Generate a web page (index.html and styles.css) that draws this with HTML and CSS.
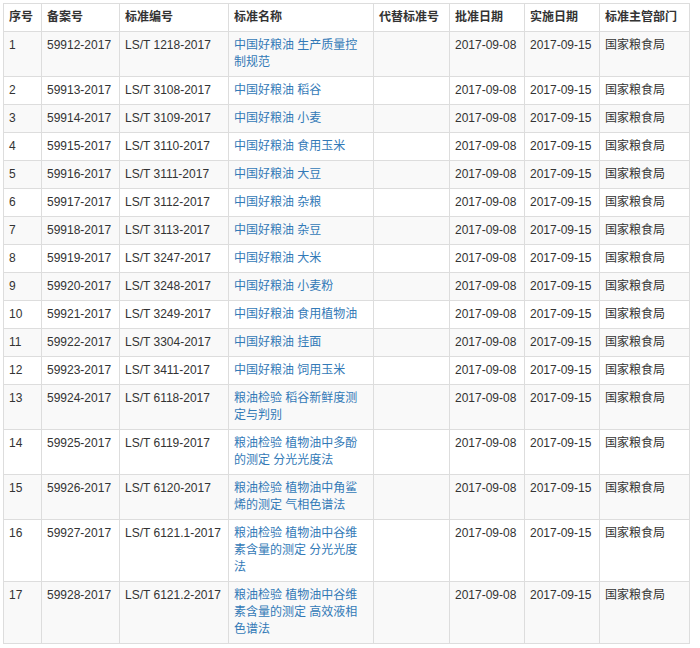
FILE: index.html
```html
<!DOCTYPE html>
<html lang="zh-CN">
<head>
<meta charset="utf-8">
<title>标准列表</title>
<link rel="stylesheet" href="styles.css">
</head>
<body>
<div class="wrap">
<table class="std-table">
<colgroup>
<col class="c1"><col class="c2"><col class="c3"><col class="c4"><col class="c5"><col class="c6"><col class="c7"><col class="c8">
</colgroup>
<thead>
<tr><th>序号</th><th>备案号</th><th>标准编号</th><th>标准名称</th><th>代替标准号</th><th>批准日期</th><th>实施日期</th><th>标准主管部门</th></tr>
</thead>
<tbody>
<tr><td>1</td><td>59912-2017</td><td>LS/T 1218-2017</td><td><a href="#">中国好粮油 生产质量控制规范</a></td><td></td><td>2017-09-08</td><td>2017-09-15</td><td>国家粮食局</td></tr>
<tr><td>2</td><td>59913-2017</td><td>LS/T 3108-2017</td><td><a href="#">中国好粮油 稻谷</a></td><td></td><td>2017-09-08</td><td>2017-09-15</td><td>国家粮食局</td></tr>
<tr><td>3</td><td>59914-2017</td><td>LS/T 3109-2017</td><td><a href="#">中国好粮油 小麦</a></td><td></td><td>2017-09-08</td><td>2017-09-15</td><td>国家粮食局</td></tr>
<tr><td>4</td><td>59915-2017</td><td>LS/T 3110-2017</td><td><a href="#">中国好粮油 食用玉米</a></td><td></td><td>2017-09-08</td><td>2017-09-15</td><td>国家粮食局</td></tr>
<tr><td>5</td><td>59916-2017</td><td>LS/T 3111-2017</td><td><a href="#">中国好粮油 大豆</a></td><td></td><td>2017-09-08</td><td>2017-09-15</td><td>国家粮食局</td></tr>
<tr><td>6</td><td>59917-2017</td><td>LS/T 3112-2017</td><td><a href="#">中国好粮油 杂粮</a></td><td></td><td>2017-09-08</td><td>2017-09-15</td><td>国家粮食局</td></tr>
<tr><td>7</td><td>59918-2017</td><td>LS/T 3113-2017</td><td><a href="#">中国好粮油 杂豆</a></td><td></td><td>2017-09-08</td><td>2017-09-15</td><td>国家粮食局</td></tr>
<tr><td>8</td><td>59919-2017</td><td>LS/T 3247-2017</td><td><a href="#">中国好粮油 大米</a></td><td></td><td>2017-09-08</td><td>2017-09-15</td><td>国家粮食局</td></tr>
<tr><td>9</td><td>59920-2017</td><td>LS/T 3248-2017</td><td><a href="#">中国好粮油 小麦粉</a></td><td></td><td>2017-09-08</td><td>2017-09-15</td><td>国家粮食局</td></tr>
<tr><td>10</td><td>59921-2017</td><td>LS/T 3249-2017</td><td><a href="#">中国好粮油 食用植物油</a></td><td></td><td>2017-09-08</td><td>2017-09-15</td><td>国家粮食局</td></tr>
<tr><td>11</td><td>59922-2017</td><td>LS/T 3304-2017</td><td><a href="#">中国好粮油 挂面</a></td><td></td><td>2017-09-08</td><td>2017-09-15</td><td>国家粮食局</td></tr>
<tr><td>12</td><td>59923-2017</td><td>LS/T 3411-2017</td><td><a href="#">中国好粮油 饲用玉米</a></td><td></td><td>2017-09-08</td><td>2017-09-15</td><td>国家粮食局</td></tr>
<tr><td>13</td><td>59924-2017</td><td>LS/T 6118-2017</td><td><a href="#">粮油检验 稻谷新鲜度测定与判别</a></td><td></td><td>2017-09-08</td><td>2017-09-15</td><td>国家粮食局</td></tr>
<tr><td>14</td><td>59925-2017</td><td>LS/T 6119-2017</td><td><a href="#">粮油检验 植物油中多酚的测定 分光光度法</a></td><td></td><td>2017-09-08</td><td>2017-09-15</td><td>国家粮食局</td></tr>
<tr><td>15</td><td>59926-2017</td><td>LS/T 6120-2017</td><td><a href="#">粮油检验 植物油中角鲨烯的测定 气相色谱法</a></td><td></td><td>2017-09-08</td><td>2017-09-15</td><td>国家粮食局</td></tr>
<tr><td>16</td><td>59927-2017</td><td>LS/T 6121.1-2017</td><td><a href="#">粮油检验 植物油中谷维素含量的测定 分光光度法</a></td><td></td><td>2017-09-08</td><td>2017-09-15</td><td>国家粮食局</td></tr>
<tr><td>17</td><td>59928-2017</td><td>LS/T 6121.2-2017</td><td><a href="#">粮油检验 植物油中谷维素含量的测定 高效液相色谱法</a></td><td></td><td>2017-09-08</td><td>2017-09-15</td><td>国家粮食局</td></tr>
</tbody>
</table>
</div>
</body>
</html>
```

FILE: styles.css
```css
html, body {
  margin: 0;
  padding: 0;
  background: #fff;
}
.wrap {
  padding: 3px 0 0 3px;
}
.std-table {
  border-collapse: collapse;
  border-spacing: 0;
  table-layout: fixed;
  width: 686px;
  border: 1px solid #ddd;
  font-family: "Liberation Sans", Arial, "Noto Sans CJK SC", sans-serif;
  font-size: 12px;
  line-height: 17px;
  color: #333;
}
.c1 { width: 38px; }
.c2 { width: 78px; }
.c3 { width: 109px; }
.c4 { width: 145px; }
.c5 { width: 76px; }
.c6 { width: 75px; }
.c7 { width: 75px; }
.c8 { width: 90px; }
.std-table th,
.std-table td {
  border: 1px solid #ddd;
  padding: 5px;
  vertical-align: top;
  text-align: left;
  word-wrap: break-word;
}
.std-table th {
  font-weight: bold;
}
.std-table tbody tr:nth-child(odd) {
  background: #f9f9f9;
}
.std-table a {
  color: #337ab7;
  text-decoration: none;
}
```
